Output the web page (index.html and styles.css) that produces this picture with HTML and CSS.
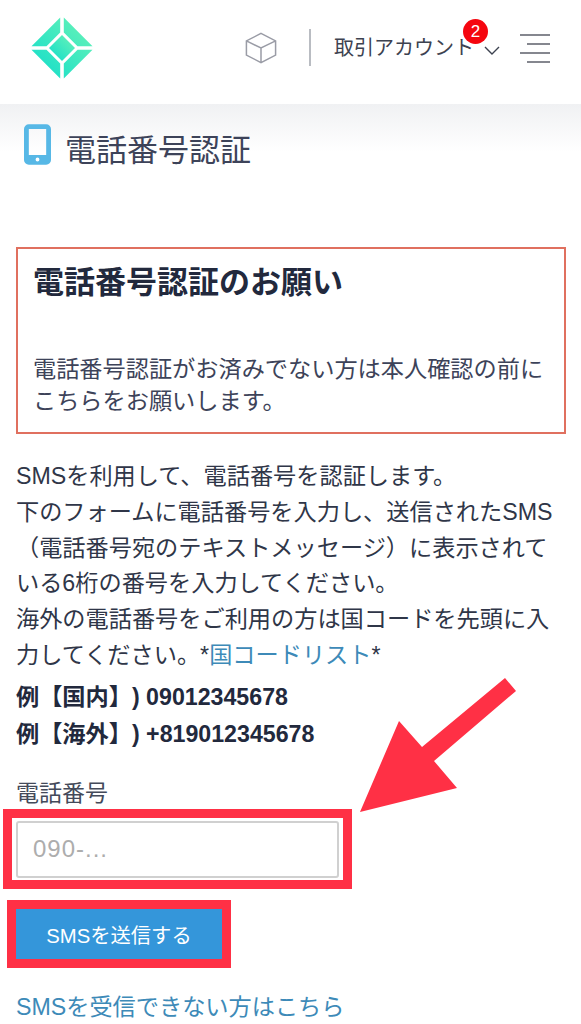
FILE: index.html
```html
<!DOCTYPE html>
<html lang="ja">
<head>
<meta charset="utf-8">
<title>電話番号認証</title>
<link rel="stylesheet" href="styles.css">
</head>
<body>
<header class="topbar">
  <svg class="logo" viewBox="0 0 64 64" aria-hidden="true">
    <defs>
      <linearGradient id="lg" x1="0" y1="1" x2="1" y2="0">
        <stop offset="0" stop-color="#0fdccb"/>
        <stop offset="1" stop-color="#6cf4b6"/>
      </linearGradient>
    </defs>
    <path fill="url(#lg)" d="M30.200 1.500 V16.500 L16.500 30.200 H1.500 Z M33.800 1.500 L62.500 30.200 H47.500 L33.800 16.500 Z M1.500 33.800 H16.500 L30.200 47.500 V62.500 Z M47.500 33.800 H62.500 L33.800 62.500 V47.500 Z"/>
    <path fill="url(#lg)" d="M32 19 L45 32 L32 45 L19 32 Z"/>
  </svg>
  <svg class="cube" viewBox="0 0 34 34" aria-hidden="true">
    <path d="M17 1.500 L32.500 9.500 V24.500 L17 32.500 L1.500 24.500 V9.500 Z M1.500 9.500 L17 17 L32.500 9.500 M17 17 V32.500"/>
  </svg>
  <span class="divider"></span>
  <div class="account">
    <span class="account-name">取引アカウント</span>
    <span class="badge">2</span>
    <svg class="chevron" viewBox="0 0 16 9" aria-hidden="true"><path d="M1 1 L8 8 L15 1"/></svg>
  </div>
  <div class="burger"><span></span><span class="short"></span><span></span><span class="short"></span></div>
</header>
<main class="page">
  <h1 class="title">
    <svg class="phone" viewBox="0 0 28 42" aria-hidden="true">
      <path fill-rule="evenodd" d="M5 0 H23 A5 5 0 0 1 28 5 V37 A5 5 0 0 1 23 42 H5 A5 5 0 0 1 0 37 V5 A5 5 0 0 1 5 0 Z M5 5 V32 H23 V5 Z M14 34.500 A2 2 0 1 0 14 38.500 A2 2 0 1 0 14 34.500 Z"/>
    </svg>
    <span>電話番号認証</span>
  </h1>
  <section class="notice">
    <h2 class="notice-title">電話番号認証のお願い</h2>
    <p class="notice-text">電話番号認証がお済みでない方は本人確認の前にこちらをお願いします。</p>
  </section>
  <p class="intro">SMSを利用して、電話番号を認証します。<br>下のフォームに電話番号を入力し、送信されたSMS（電話番号宛のテキストメッセージ）に表示されている6桁の番号を入力してください。<br>海外の電話番号をご利用の方は国コードを先頭に入力してください。*<a class="link" href="#">国コードリスト</a>*</p>
  <p class="examples">例【国内】) 09012345678<br>例【海外】) +819012345678</p>
  <label class="label" for="tel">電話番号</label>
  <div class="mark mark-input"><input class="input" id="tel" type="text" placeholder="090-..."></div>
  <div class="mark mark-button"><button class="button" type="button">SMSを送信する</button></div>
  <a class="link help" href="#">SMSを受信できない方はこちら</a>
</main>
<svg class="arrow" viewBox="0 0 581 1024" aria-hidden="true">
  <polygon points="505,678 516,691 434,761 457,788 360,812 399,721 422,747"/>
</svg>
</body>
</html>
```
FILE: styles.css
```css
* { box-sizing: border-box; }
html, body { margin: 0; padding: 0; }
body {
  position: relative;
  width: 581px;
  height: 1024px;
  overflow: hidden;
  background: #fff;
  color: #2f3648;
  font-family: "Liberation Sans", "Noto Sans CJK JP", sans-serif;
  text-spacing-trim: space-all;
}
.topbar {
  display: flex;
  align-items: center;
  height: 104px;
  padding: 0 31px 9px 30px;
  background: #fff;
}
.logo { width: 64px; height: 64px; flex: none; }
.cube {
  width: 32px;
  height: 32px;
  margin-left: 151px;
  flex: none;
  fill: none;
  stroke: #9a9ca6;
  stroke-width: 1.600;
}
.divider {
  width: 1.500px;
  height: 37px;
  margin-left: 32px;
  background: #b9bcc2;
  flex: none;
}
.account {
  position: relative;
  display: flex;
  align-items: center;
  margin-left: 23.500px;
  flex: none;
}
.account-name { font-size: 20px; line-height: 28px; color: #3d4250; white-space: nowrap; }
.badge {
  position: absolute;
  top: -15px;
  left: 129px;
  width: 25px;
  height: 25px;
  border-radius: 50%;
  background: #f5060f;
  color: #fff;
  font-size: 17px;
  line-height: 25px;
  text-align: center;
}
.chevron {
  width: 16px;
  height: 9px;
  margin-left: 10px;
  margin-top: 5px;
  fill: none;
  stroke: #3d4250;
  stroke-width: 1.400;
}
.burger {
  display: flex;
  flex-direction: column;
  align-items: flex-end;
  gap: 7.500px;
  width: 30px;
  margin-left: auto;
  margin-top: 2px;
}
.burger span { display: block; width: 30px; height: 1.500px; background: #85878f; }
.burger .short { width: 23px; }
.page {
  padding: 0 15px 0 16px;
  background: linear-gradient(#f0f1f3 0, #fff 48px);
}
.title {
  display: flex;
  align-items: center;
  gap: 14px;
  height: 87px;
  margin: 0 0 56px;
  padding: 0 0 0 8px;
  font-size: 31px;
  font-weight: 400;
  color: #3d4359;
}
.phone { width: 27px; height: 41px; flex: none; fill: #57b8e6; margin-bottom: 6px; }
.notice {
  height: 187px;
  padding: 12px 15px 0;
  border: 2px solid #e0705f;
}
.notice-title {
  margin: 0 0 49px;
  font-size: 31px;
  line-height: 44px;
  font-weight: 700;
  color: #22293d;
}
.notice-text { margin: 0; font-size: 23.200px; line-height: 31.500px; color: #3d4359; }
.intro { margin: 25px 0 0; font-size: 23.200px; line-height: 35.800px; }
.link { color: #3d8ab8; text-decoration: none; }
.examples {
  margin: 5px 0 0;
  font-size: 23.200px;
  line-height: 37px;
  font-weight: 700;
  color: #22293d;
}
.label { display: block; margin-top: 22px; font-size: 23px; line-height: 36px; color: #444a5a; }
.mark { border-style: solid; border-color: #ff3045; }
.mark-input {
  width: 349px;
  margin: -2px 0 0 -13px;
  padding: 3px 4px 2px;
  border-width: 9px;
}
.input {
  display: block;
  width: 323px;
  height: 57px;
  padding: 0 15px;
  border: 2px solid #d0d0d0;
  border-radius: 3px;
  background: #fff;
  font-family: inherit;
  font-size: 24px;
  letter-spacing: 1px;
}
.input::placeholder { color: #adadad; opacity: 1; }
.mark-button {
  width: 224px;
  margin: 11px 0 0 -9px;
  border-width: 9px;
}
.button {
  display: block;
  width: 206px;
  height: 50px;
  border: 0;
  background: #3496da;
  color: #fff;
  font-family: inherit;
  font-size: 20.300px;
}
.help { display: block; margin-top: 23px; font-size: 23.200px; line-height: 32px; }
.arrow {
  position: absolute;
  top: 0;
  left: 0;
  width: 581px;
  height: 1024px;
  fill: #ff3045;
  pointer-events: none;
}
```
